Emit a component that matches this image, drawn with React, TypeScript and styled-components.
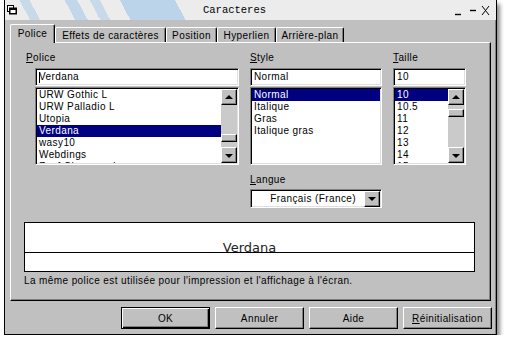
import React from "react";
import styled, { createGlobalStyle, css } from "styled-components";

const GlobalStyle = createGlobalStyle`
  html, body {
    margin: 0;
    padding: 0;
    background: #ffffff;
  }
  body {
    font-family: "Liberation Sans", Arial, sans-serif;
    font-size: 10px;
    letter-spacing: 0.4px;
    color: #000;
  }
`;

const raised = css`
  border: 1px solid;
  border-color: #ffffff #000000 #000000 #ffffff;
  box-shadow: inset -1px -1px 0 #808080;
  background: #c0c0c0;
`;

const sunken = css`
  border: 1px solid;
  border-color: #808080 #ffffff #ffffff #808080;
  box-shadow: inset 1px 1px 0 #000000, inset -1px -1px 0 #dfdfdf;
`;

const Window = styled.div`
  margin-left: 4px;
  width: 493px;
  height: 335px;
  box-sizing: border-box;
  border: 1px solid #000;
  border-top: none;
  background: #c0c0c0;
  box-shadow: 3px 4px 4px rgba(0, 0, 0, 0.45), inset -1px 0 0 #808080;
  display: flex;
  flex-direction: column;
`;

const TitleBar = styled.div`
  height: 20px;
  display: flex;
  align-items: center;
  padding: 0 4px 0 2px;
  background:
    linear-gradient(62deg, transparent 0 5%, rgba(176, 206, 232, 0.6) 5% 7%, transparent 7% 14%,
      rgba(176, 206, 232, 0.7) 14% 16.5%, transparent 16.5% 19%, rgba(176, 206, 232, 0.6) 19% 21%,
      transparent 21% 25%, rgba(176, 206, 232, 0.8) 25% 36%, transparent 36% 100%),
    #ececec;
`;

const Title = styled.div`
  flex: 1;
  text-align: center;
  font-family: "Liberation Mono", "DejaVu Sans Mono", monospace;
  font-size: 10.5px;
  letter-spacing: 0;
  color: #000;
`;

const TabRow = styled.div`
  height: 18px;
  margin-top: 4px;
  padding-left: 5px;
  display: flex;
  align-items: flex-end;
`;

const Tab = styled.div<{ $active?: boolean; $w: number }>`
  box-sizing: border-box;
  width: ${(p) => p.$w}px;
  height: ${(p) => (p.$active ? 19 : 15)}px;
  margin-bottom: ${(p) => (p.$active ? -1 : 0)}px;
  position: relative;
  z-index: ${(p) => (p.$active ? 2 : 0)};
  border-top: 1px solid #fff;
  border-left: 1px solid #fff;
  border-right: 1px solid #000;
  border-radius: 2px 2px 0 0;
  box-shadow: inset -1px 0 0 #808080;
  background: #c0c0c0;
  display: flex;
  align-items: center;
  justify-content: center;
  padding-bottom: ${(p) => (p.$active ? 1 : 0)}px;
  white-space: nowrap;
`;

const Panel = styled.div`
  box-sizing: border-box;
  height: 259px;
  margin: 0 5px;
  border: 1px solid;
  border-color: #fff #000 #000 #fff;
  box-shadow: inset -1px -1px 0 #808080;
  padding: 9px 0 0 24px;
  display: flex;
  flex-direction: column;
`;

const Columns = styled.div`
  display: grid;
  grid-template-columns: 204px 132px 73px;
  column-gap: 11px;
  align-items: start;
`;

const Column = styled.div`
  display: flex;
  flex-direction: column;
`;

const Label = styled.div<{ $shift?: number }>`
  height: 12px;
  line-height: 12px;
  margin-left: ${(p) => p.$shift ?? 0}px;
  margin-bottom: 4px;
  white-space: nowrap;
`;

const Field = styled.div`
  box-sizing: border-box;
  height: 18px;
  ${sunken};
  background: #fff;
  padding-left: 3px;
  line-height: 16px;
  white-space: nowrap;
  display: flex;
  align-items: center;
`;

const Caret = styled.span`
  display: inline-block;
  width: 1px;
  height: 11px;
  background: #000;
  margin-right: -1px;
`;

const ListBox = styled.div`
  box-sizing: border-box;
  height: 78px;
  margin-top: 1px;
  ${sunken};
  background: #fff;
  padding: 1px;
  display: flex;
  overflow: hidden;
`;

const Rows = styled.div`
  flex: 1;
  overflow: hidden;
`;

const Row = styled.div<{ $selected?: boolean }>`
  height: 12px;
  line-height: 12px;
  padding-left: 2px;
  white-space: nowrap;
  background: ${(p) => (p.$selected ? "#000080" : "transparent")};
  color: ${(p) => (p.$selected ? "#fff" : "#000")};
`;

const ScrollBar = styled.div`
  width: 16px;
  display: flex;
  flex-direction: column;
  background: #cacaca;
`;

const ArrowButton = styled.div`
  box-sizing: border-box;
  width: 16px;
  height: 16px;
  ${raised};
  display: flex;
  align-items: center;
  justify-content: center;
`;

const Triangle = styled.div<{ $down?: boolean }>`
  width: 0;
  height: 0;
  border-left: 4px solid transparent;
  border-right: 4px solid transparent;
  ${(p) =>
    p.$down
      ? "border-top: 4px solid #000; margin-top: 1px;"
      : "border-bottom: 4px solid #000; margin-bottom: 1px;"}
`;

const Track = styled.div`
  flex: 1;
`;

const Thumb = styled.div<{ $top: number }>`
  box-sizing: border-box;
  height: 8px;
  margin-top: ${(p) => p.$top}px;
  ${raised};
`;

const Select = styled.div`
  box-sizing: border-box;
  height: 19px;
  ${sunken};
  background: #fff;
  padding: 1px;
  display: flex;
  align-items: center;
`;

const SelectText = styled.div`
  flex: 1;
  text-align: right;
  padding-right: 8px;
  white-space: nowrap;
`;

const Preview = styled.div`
  box-sizing: border-box;
  width: 451px;
  height: 50px;
  margin: 14px 0 0 -11px;
  border: 1px solid #000;
  background: #fff;
`;

const PreviewLine = styled.div`
  height: 29px;
  border-bottom: 1px solid #000;
  display: flex;
  align-items: flex-end;
  justify-content: center;
`;

const PreviewText = styled.span`
  font-family: "DejaVu Sans", Verdana, sans-serif;
  font-size: 13px;
  letter-spacing: 0;
  line-height: 13px;
  color: #222;
  margin-bottom: -2px;
`;

const Caption = styled.div`
  margin: 3px 0 0 -11px;
  height: 12px;
  line-height: 12px;
  white-space: nowrap;
`;

const ButtonRow = styled.div`
  margin-top: 6px;
  padding-right: 4px;
  display: flex;
  justify-content: flex-end;
  gap: 5px;
`;

const Button = styled.div<{ $default?: boolean }>`
  box-sizing: border-box;
  width: 89px;
  height: 22px;
  ${raised};
  display: flex;
  align-items: center;
  justify-content: center;
  ${(p) =>
    p.$default &&
    css`
      border-color: #000;
      box-shadow: inset 1px 1px 0 #fff, inset -1px -1px 0 #000, inset -2px -2px 0 #808080;
    `}
`;

const WindowIcon = () => (
  <svg width="10" height="10" viewBox="0 0 10 10">
    <rect x="0.5" y="0.5" width="6" height="6" fill="#fff" stroke="#000" />
    <rect x="2" y="2.5" width="8" height="7" fill="#000" />
    <rect x="3.5" y="5" width="5" height="3" fill="#fff" />
  </svg>
);

const Controls = () => (
  <svg width="40" height="12" viewBox="0 0 40 12">
    <line x1="3" y1="10.5" x2="9" y2="10.5" stroke="#000" strokeWidth="1.4" />
    <line x1="18" y1="6.5" x2="24" y2="6.5" stroke="#000" strokeWidth="1.4" />
    <line x1="30" y1="2" x2="37" y2="11" stroke="#000" strokeWidth="1" />
    <line x1="37" y1="2" x2="30" y2="11" stroke="#000" strokeWidth="1" />
  </svg>
);

const Scroll = ({ thumb }: { thumb: number }) => (
  <ScrollBar>
    <ArrowButton>
      <Triangle />
    </ArrowButton>
    <Track>
      <Thumb $top={thumb} />
    </Track>
    <ArrowButton>
      <Triangle $down />
    </ArrowButton>
  </ScrollBar>
);

const fonts = ["URW Gothic L", "URW Palladio L", "Utopia", "Verdana", "wasy10", "Webdings", "Zapf Chancery L"];
const styles = ["Normal", "Italique", "Gras", "Italique gras"];
const sizes = ["10", "10.5", "11", "12", "13", "14", "15"];

const tabs = [
  { label: "Police", w: 45 },
  { label: "Effets de caractères", w: 111 },
  { label: "Position", w: 51 },
  { label: "Hyperlien", w: 59 },
  { label: "Arrière-plan", w: 68 },
];

export default function App() {
  return (
    <>
      <GlobalStyle />
      <Window>
        <TitleBar>
          <WindowIcon />
          <Title>Caracteres</Title>
          <Controls />
        </TitleBar>
        <TabRow>
          {tabs.map((t, i) => (
            <Tab key={t.label} $w={t.w} $active={i === 0}>
              {t.label}
            </Tab>
          ))}
        </TabRow>
        <Panel>
          <Columns>
            <Column>
              <Label $shift={-9}>
                <u>P</u>olice
              </Label>
              <Field>
                <Caret />
                Verdana
              </Field>
              <ListBox>
                <Rows>
                  {fonts.map((f) => (
                    <Row key={f} $selected={f === "Verdana"}>
                      {f}
                    </Row>
                  ))}
                </Rows>
                <Scroll thumb={29} />
              </ListBox>
            </Column>
            <Column>
              <Label>
                <u>S</u>tyle
              </Label>
              <Field>Normal</Field>
              <ListBox>
                <Rows>
                  {styles.map((s) => (
                    <Row key={s} $selected={s === "Normal"}>
                      {s}
                    </Row>
                  ))}
                </Rows>
              </ListBox>
              <Label style={{ marginTop: 9, marginBottom: 3 }}>
                <u>L</u>angue
              </Label>
              <Select>
                <SelectText>Français (France)</SelectText>
                <ArrowButton>
                  <Triangle $down />
                </ArrowButton>
              </Select>
            </Column>
            <Column>
              <Label>
                <u>T</u>aille
              </Label>
              <Field>10</Field>
              <ListBox>
                <Rows>
                  {sizes.map((s) => (
                    <Row key={s} $selected={s === "10"}>
                      {s}
                    </Row>
                  ))}
                </Rows>
                <Scroll thumb={4} />
              </ListBox>
            </Column>
          </Columns>
          <Preview>
            <PreviewLine>
              <PreviewText>Verdana</PreviewText>
            </PreviewLine>
          </Preview>
          <Caption>La même police est utilisée pour l'impression et l'affichage à l'écran.</Caption>
        </Panel>
        <ButtonRow>
          <Button $default>OK</Button>
          <Button>Annuler</Button>
          <Button>Aide</Button>
          <Button>
            <u>R</u>éinitialisation
          </Button>
        </ButtonRow>
      </Window>
    </>
  );
}
